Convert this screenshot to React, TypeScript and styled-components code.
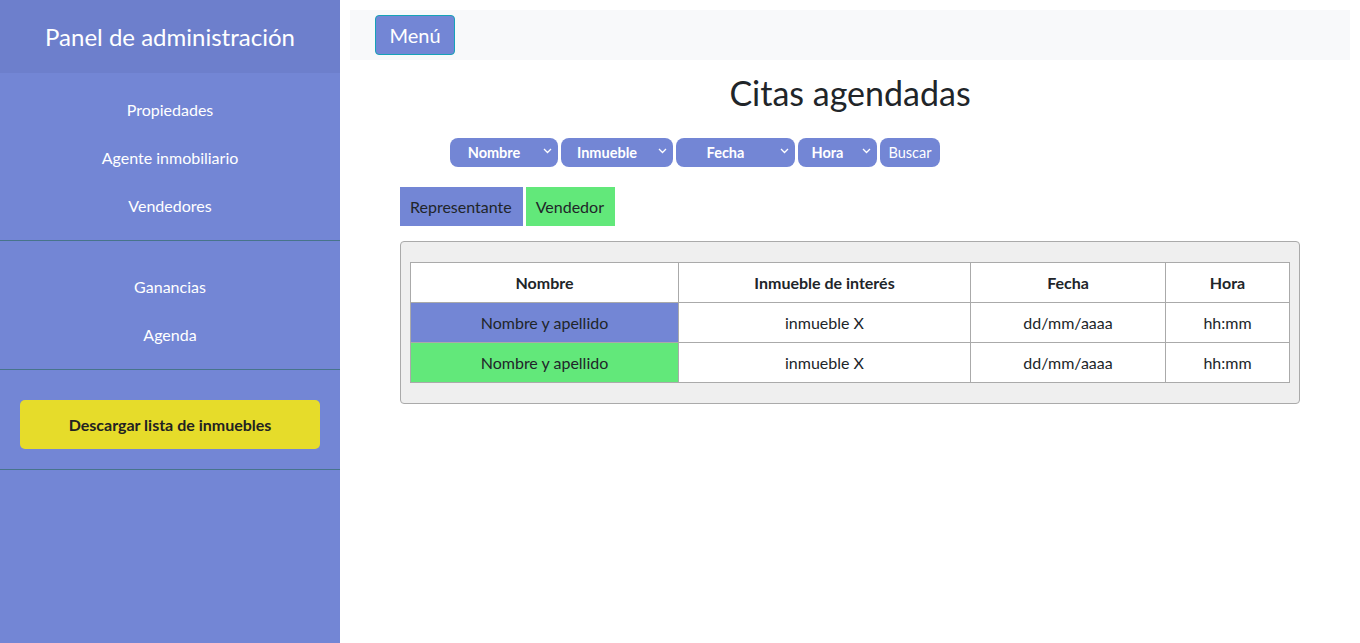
import styled, { createGlobalStyle } from 'styled-components';

const GlobalStyle = createGlobalStyle`
  * { box-sizing: border-box; }
  body {
    margin: 0;
    font-family: Lato, "Open Sans", sans-serif;
    color: #212529;
    background: #fff;
  }
`;

const Layout = styled.div`
  display: flex;
  min-height: 643px;
`;

const Sidebar = styled.nav`
  width: 340px;
  flex-shrink: 0;
  background: #7386d5;
  color: #fff;
`;

const SidebarHeader = styled.div`
  height: 73px;
  background: #6d7fcc;
  display: flex;
  align-items: center;
  justify-content: center;
  font-size: 24px;
`;

const NavGroup = styled.ul<{ $top: number }>`
  list-style: none;
  margin: 0;
  padding: ${({ $top }) => $top}px 0 11px;
  border-bottom: 1px solid #47748b;
`;

const NavItem = styled.li`
  height: 48px;
  display: flex;
  align-items: center;
  justify-content: center;
  font-size: 16px;
`;

const DownloadBlock = styled.div`
  padding: 30px 20px 20px;
  border-bottom: 1px solid #47748b;
`;

const DownloadButton = styled.button`
  width: 100%;
  height: 49px;
  border: none;
  border-radius: 5px;
  background: #e6dc2a;
  color: #222;
  font-family: inherit;
  font-weight: 700;
  font-size: 16px;
`;

const Main = styled.main`
  flex: 1;
  padding: 10px;
`;

const TopBar = styled.div`
  height: 50px;
  background: #f8f9fa;
  display: flex;
  align-items: center;
  padding-left: 25px;
`;

const MenuButton = styled.button`
  width: 80px;
  height: 40px;
  background: #7386d5;
  color: #fff;
  border: 1px solid #17a2b8;
  border-radius: 4px;
  font-family: inherit;
  font-size: 20px;
`;

const Title = styled.h1`
  margin: 12px 0 0;
  text-align: center;
  font-size: 34px;
  font-weight: 400;
  line-height: 42px;
`;

const Filters = styled.div`
  display: flex;
  gap: 2px;
  margin: 24px 0 0 100px;
`;

const Select = styled.div<{ $width: number }>`
  position: relative;
  width: ${({ $width }) => $width}px;
  height: 29px;
  background: #7386d5;
  color: #fff;
  border-radius: 8px;
  font-size: 14.5px;
  font-weight: 700;
  display: flex;
  align-items: center;
  justify-content: center;
  padding-right: 20px;
  & + & { margin-left: 1px; }
  svg {
    position: absolute;
    right: 6px;
    top: 10px;
  }
`;

const SearchButton = styled.button`
  width: 60px;
  height: 29px;
  margin-left: 1px;
  background: #7386d5;
  color: #fff;
  border: none;
  border-radius: 8px;
  font-family: inherit;
  font-size: 14.5px;
  padding: 0;
`;

const Legend = styled.div`
  display: flex;
  gap: 3px;
  margin: 20px 0 0 50px;
`;

const LegendTag = styled.div<{ $color: string }>`
  height: 39px;
  padding: 0 11px 0 10px;
  display: flex;
  align-items: center;
  background: ${({ $color }) => $color};
  font-size: 16px;
`;

const TableCard = styled.div`
  margin: 15px 0 0 50px;
  width: 900px;
  background: #efefef;
  border: 1px solid #aaa;
  border-radius: 4px;
  padding: 20px 9px 20px;
`;

const Table = styled.table`
  width: 100%;
  border-collapse: collapse;
  background: #fff;
  font-size: 16px;
  th, td {
    border: 1px solid #aaa;
    height: 40px;
    text-align: center;
    padding: 0;
  }
  th { font-weight: 700; }
`;

const NameCell = styled.td<{ $color: string }>`
  background: ${({ $color }) => $color};
`;

const Chevron = () => (
  <svg width="9" height="6" viewBox="0 0 9 6">
    <path d="M1 1l3.5 3.5L8 1" fill="none" stroke="#fff" strokeWidth="1.3" />
  </svg>
);

const BLUE = '#7386d5';
const GREEN = '#62e87a';

const rows = [BLUE, GREEN];

export default function App() {
  return (
    <>
      <GlobalStyle />
      <Layout>
        <Sidebar>
          <SidebarHeader>Panel de administración</SidebarHeader>
          <NavGroup $top={12}>
            <NavItem>Propiedades</NavItem>
            <NavItem>Agente inmobiliario</NavItem>
            <NavItem>Vendedores</NavItem>
          </NavGroup>
          <NavGroup $top={21}>
            <NavItem>Ganancias</NavItem>
            <NavItem>Agenda</NavItem>
          </NavGroup>
          <DownloadBlock>
            <DownloadButton>Descargar lista de inmuebles</DownloadButton>
          </DownloadBlock>
        </Sidebar>
        <Main>
          <TopBar>
            <MenuButton>Menú</MenuButton>
          </TopBar>
          <Title>Citas agendadas</Title>
          <Filters>
            <Select $width={108}>Nombre<Chevron /></Select>
            <Select $width={112}>Inmueble<Chevron /></Select>
            <Select $width={119}>Fecha<Chevron /></Select>
            <Select $width={79}>Hora<Chevron /></Select>
            <SearchButton>Buscar</SearchButton>
          </Filters>
          <Legend>
            <LegendTag $color={BLUE}>Representante</LegendTag>
            <LegendTag $color={GREEN}>Vendedor</LegendTag>
          </Legend>
          <TableCard>
            <Table>
              <colgroup>
                <col style={{ width: 268 }} />
                <col style={{ width: 292 }} />
                <col style={{ width: 195 }} />
                <col />
              </colgroup>
              <thead>
                <tr>
                  <th>Nombre</th>
                  <th>Inmueble de interés</th>
                  <th>Fecha</th>
                  <th>Hora</th>
                </tr>
              </thead>
              <tbody>
                {rows.map((c, i) => (
                  <tr key={i}>
                    <NameCell $color={c}>Nombre y apellido</NameCell>
                    <td>inmueble X</td>
                    <td>dd/mm/aaaa</td>
                    <td>hh:mm</td>
                  </tr>
                ))}
              </tbody>
            </Table>
          </TableCard>
        </Main>
      </Layout>
    </>
  );
}
